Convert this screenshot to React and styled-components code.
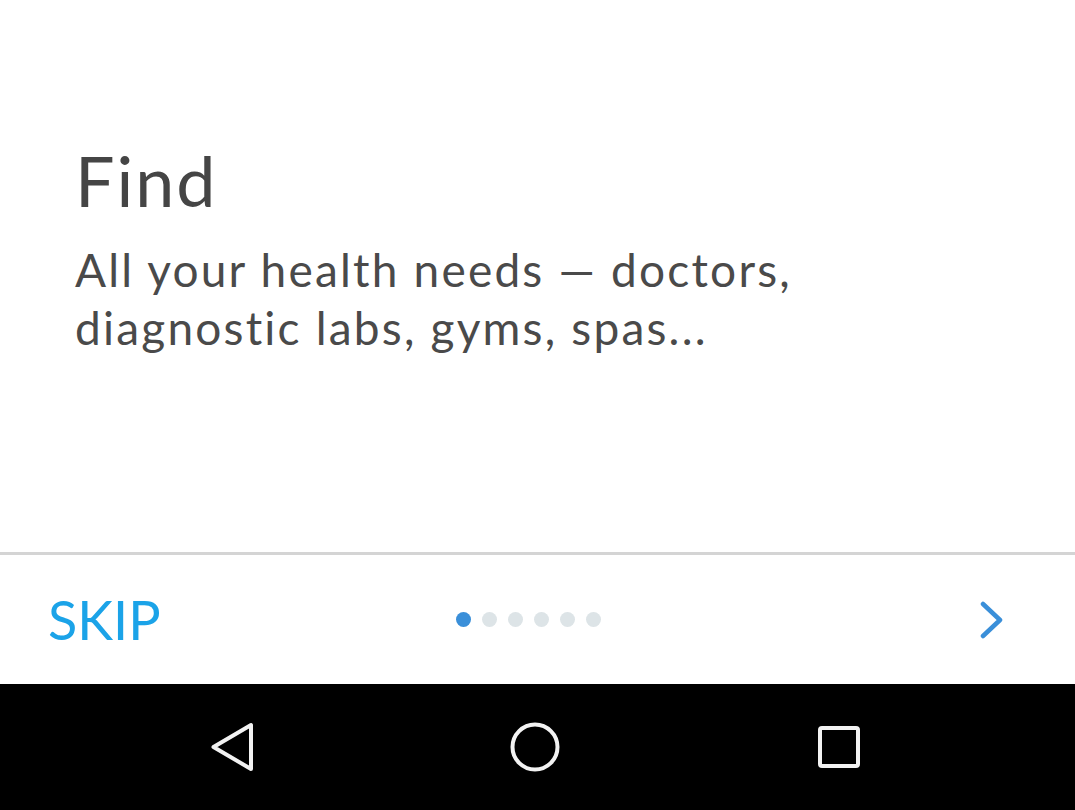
import styled, { createGlobalStyle } from "styled-components";

const GlobalStyle = createGlobalStyle`
    html, body {
        margin: 0;
        padding: 0;
        background: #ffffff;
    }
    body {
        font-family: Lato, "Open Sans", sans-serif;
    }
`;

const Screen = styled.div`
    width: 1075px;
    height: 810px;
    display: flex;
    flex-direction: column;
    overflow: hidden;
`;

const Slide = styled.div`
    flex: 1;
    display: flex;
    flex-direction: column;
    padding: 140px 0 0 75px;
    border-bottom: 3px solid #d4d4d4;
`;

const Title = styled.h1`
    margin: 0;
    font-size: 70px;
    font-weight: 400;
    line-height: 80px;
    letter-spacing: 2px;
    color: #454545;
`;

const Text = styled.p`
    margin: 21px 0 0;
    font-size: 46px;
    line-height: 58px;
    letter-spacing: 2.2px;
    color: #4a4a4a;
    max-width: 790px;
`;

const Footer = styled.div`
    height: 129px;
    display: grid;
    grid-template-columns: 1fr auto 1fr;
    align-items: center;
    padding: 0 70px 0 48px;
`;

const Skip = styled.button`
    justify-self: start;
    border: none;
    background: none;
    padding: 0;
    font-family: Lato, "Open Sans", sans-serif;
    font-size: 54px;
    color: #1ba3e8;
    cursor: pointer;
`;

const Dots = styled.div`
    display: flex;
    gap: 11px;
    margin-left: 4px;
`;

const Dot = styled.span`
    width: 15px;
    height: 15px;
    border-radius: 50%;
    background: ${(p) => (p.$active ? "#3a8fd9" : "#dde4e7")};
`;

const Next = styled.button`
    justify-self: end;
    border: none;
    background: none;
    padding: 0;
    display: flex;
    cursor: pointer;
`;

const NavBar = styled.div`
    height: 126px;
    background: #000;
    display: grid;
    grid-template-columns: repeat(3, 1fr);
    align-items: center;
    justify-items: center;
    padding: 0 84px 0 80px;
`;

const NavIcon = styled.svg`
    width: 52px;
    height: 52px;
`;

function App() {
    const dots = [0, 1, 2, 3, 4, 5];

    return (
        <Screen>
            <GlobalStyle />
            <Slide>
                <Title>Find</Title>
                <Text>All your health needs — doctors, diagnostic labs, gyms, spas...</Text>
            </Slide>
            <Footer>
                <Skip>SKIP</Skip>
                <Dots>
                    {dots.map((d) => (
                        <Dot key={d} $active={d === 0} />
                    ))}
                </Dots>
                <Next>
                    <svg width="26" height="38" viewBox="0 0 26 38">
                        <path d="M4 3 L21 19 L4 35" fill="none" stroke="#3a8fd9" strokeWidth="4.5" strokeLinecap="round" strokeLinejoin="round" />
                    </svg>
                </Next>
            </Footer>
            <NavBar>
                <NavIcon viewBox="0 0 52 52">
                    <path d="M45 4 L45 48 L7.5 26 Z" fill="none" stroke="#f2f2f2" strokeWidth="4" strokeLinejoin="round" />
                </NavIcon>
                <NavIcon viewBox="0 0 52 52">
                    <circle cx="26" cy="26" r="22.5" fill="none" stroke="#f2f2f2" strokeWidth="4" />
                </NavIcon>
                <NavIcon viewBox="0 0 52 52">
                    <rect x="7" y="7" width="38" height="38" rx="2" fill="none" stroke="#f2f2f2" strokeWidth="4" />
                </NavIcon>
            </NavBar>
        </Screen>
    );
}

export default App;
